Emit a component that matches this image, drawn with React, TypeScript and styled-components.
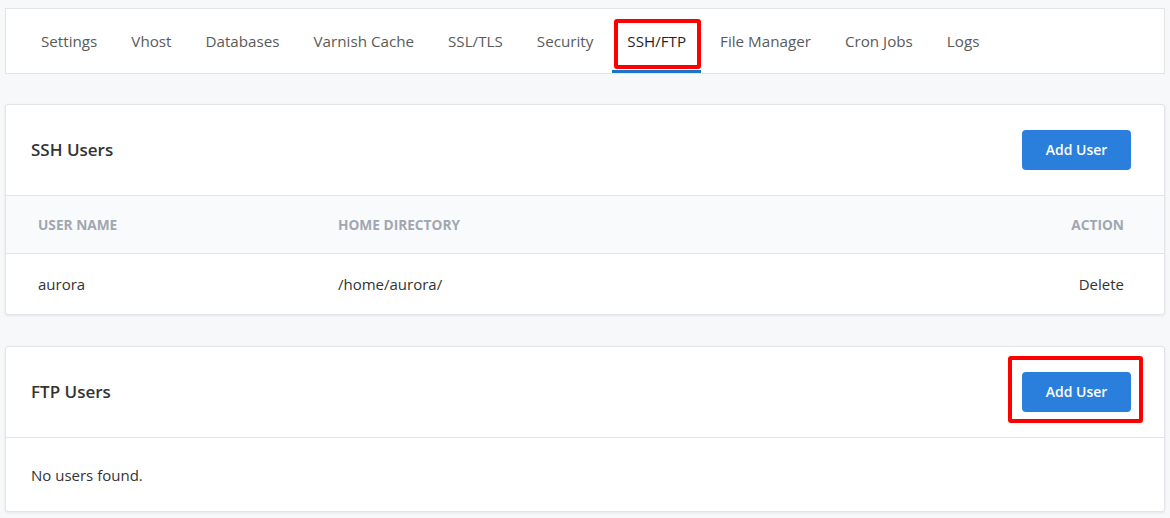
import React from 'react';
import styled, { createGlobalStyle, css } from 'styled-components';

const GlobalStyle = createGlobalStyle`
  html, body {
    margin: 0;
    padding: 0;
    background: #f7f8fa;
    font-family: "Open Sans", "Noto Sans", Arial, sans-serif;
    color: #333;
  }
  * { box-sizing: border-box; }
`;

const Page = styled.div`
  padding: 8px 5px 6px;
  display: flex;
  flex-direction: column;
  gap: 30px;
`;

const TabBar = styled.nav`
  background: #fff;
  border: 1px solid #e3e4e6;
  height: 66px;
  display: flex;
  align-items: stretch;
  padding-left: 20px;
  gap: 4px;
`;

// red marker drawn over the item it highlights
const highlight = css`
  &::after {
    content: '';
    position: absolute;
    border: 4px solid #f00;
    border-radius: 3px;
  }
`;

const Tab = styled.a<{ active?: boolean }>`
  position: relative;
  display: flex;
  align-items: center;
  padding: 2px 15px 0;
  font-size: 15.2px;
  color: ${({ active }) => (active ? '#1f1f1f' : '#5a5a5a')};
  text-decoration: none;
  border-bottom: 3px solid ${({ active }) => (active ? '#1a74c9' : 'transparent')};
  cursor: pointer;

  ${({ active }) =>
    active &&
    css`
      ${highlight}
      &::after {
        left: 2px;
        right: 0;
        top: 10px;
        bottom: 1px;
      }
    `}
`;

const Card = styled.section`
  background: #fff;
  border: 1px solid #e2e4e7;
  border-radius: 3px;
  box-shadow: 0 1px 3px rgba(0, 0, 0, 0.08);

  & + & {
    margin-top: 1px;
  }
`;

const CardHeader = styled.div`
  height: 91px;
  display: flex;
  align-items: center;
  justify-content: space-between;
  padding: 0 33px 1px 25px;
  border-bottom: 1px solid #e2e4e7;
`;

const CardTitle = styled.h2`
  margin: 0;
  font-size: 17px;
  font-weight: 600;
  color: #333;
`;

const ButtonWrap = styled.div<{ marked?: boolean }>`
  position: relative;
  ${({ marked }) =>
    marked &&
    css`
      ${highlight}
      &::after {
        left: -14px;
        right: -12px;
        top: -16px;
        bottom: -11px;
      }
    `}
`;

const Button = styled.button`
  width: 109px;
  height: 40px;
  background: #2a7edc;
  color: #fff;
  border: none;
  border-radius: 4px;
  font-family: inherit;
  font-size: 14px;
  font-weight: 600;
  cursor: pointer;
`;

const Table = styled.table`
  width: 100%;
  border-collapse: collapse;
`;

const Th = styled.th<{ right?: boolean }>`
  height: 57px;
  background: #f9fafb;
  text-align: ${({ right }) => (right ? 'right' : 'left')};
  font-size: 13.7px;
  font-weight: 700;
  color: #a0a7b1;
  text-transform: uppercase;
  padding: 0 40px 0 32px;
  border-bottom: 1px solid #e2e4e7;
`;

const Td = styled.td<{ right?: boolean }>`
  height: 61px;
  text-align: ${({ right }) => (right ? 'right' : 'left')};
  font-size: 15px;
  color: #333;
  padding: 0 40px 0 32px;
`;

const Empty = styled.div`
  height: 73px;
  display: flex;
  align-items: center;
  padding-left: 25px;
  font-size: 15px;
  color: #333;
`;

const tabs = ['Settings', 'Vhost', 'Databases', 'Varnish Cache', 'SSL/TLS', 'Security', 'SSH/FTP', 'File Manager', 'Cron Jobs', 'Logs'];

const sshUsers = [{ name: 'aurora', home: '/home/aurora/' }];

export default function App() {
  return (
    <>
      <GlobalStyle />
      <Page>
        <TabBar>
          {tabs.map((t) => (
            <Tab key={t} active={t === 'SSH/FTP'}>
              {t}
            </Tab>
          ))}
        </TabBar>

        <Card>
          <CardHeader>
            <CardTitle>SSH Users</CardTitle>
            <ButtonWrap>
              <Button>Add User</Button>
            </ButtonWrap>
          </CardHeader>
          <Table>
            <thead>
              <tr>
                <Th style={{ width: 300 }}>User Name</Th>
                <Th>Home Directory</Th>
                <Th right>Action</Th>
              </tr>
            </thead>
            <tbody>
              {sshUsers.map((u) => (
                <tr key={u.name}>
                  <Td>{u.name}</Td>
                  <Td>{u.home}</Td>
                  <Td right>Delete</Td>
                </tr>
              ))}
            </tbody>
          </Table>
        </Card>

        <Card>
          <CardHeader>
            <CardTitle>FTP Users</CardTitle>
            <ButtonWrap marked>
              <Button>Add User</Button>
            </ButtonWrap>
          </CardHeader>
          <Empty>No users found.</Empty>
        </Card>
      </Page>
    </>
  );
}
